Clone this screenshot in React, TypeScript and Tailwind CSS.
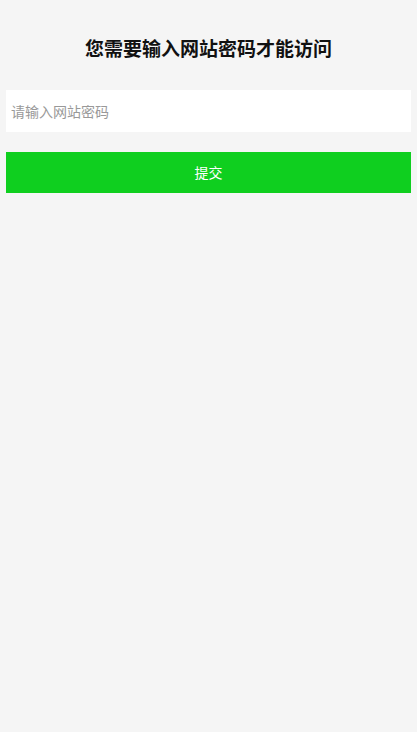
export default function App() {
  return (
    <div
      className="min-h-screen w-full bg-[#f5f5f5] px-[6px]"
      style={{ fontFamily: '"Noto Sans CJK SC", "Noto Sans", sans-serif' }}
    >
      <h1 className="pt-[34px] text-center text-[19px] font-bold leading-[28px] text-[#111]">
        您需要输入网站密码才能访问
      </h1>
      <div className="mt-[28px]">
        <input
          type="password"
          placeholder="请输入网站密码"
          className="block h-[42px] w-full bg-white px-[5px] text-[14px] text-[#333] outline-none placeholder:text-[#999]"
        />
      </div>
      <button className="mt-[20px] block h-[41px] w-full bg-[#0fcf1f] text-[14px] text-white">
        提交
      </button>
    </div>
  )
}
